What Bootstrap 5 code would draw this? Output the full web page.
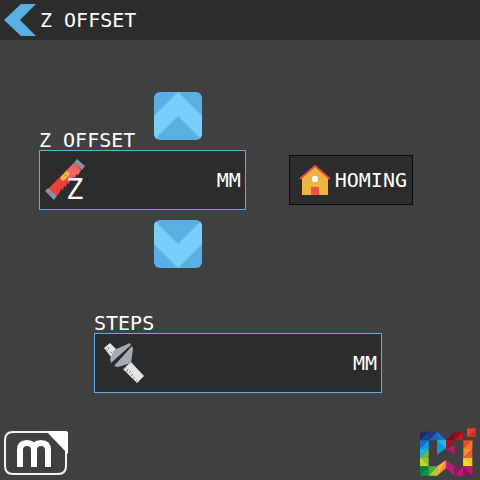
<!DOCTYPE html>
<html lang="en">
<head>
<meta charset="utf-8">
<meta name="viewport" content="width=device-width, initial-scale=1">
<title>Z Offset</title>
<link href="https://cdn.jsdelivr.net/npm/bootstrap@5.3.0/dist/css/bootstrap.min.css" rel="stylesheet">
<style>
body{background:#404040;color:#fff;font:20px/20px "DejaVu Sans Mono",monospace}
.topbar{background:#2c2c2c;height:40px}
.topbar h1{font-size:20px;line-height:20px;font-weight:400}
.back{width:32px;height:32px}
.back svg,.arrow svg,.logo{display:block}
.offset-area{padding:52px 67px 0 39px;gap:43px}
.arrow{width:48px;height:48px;border-radius:6px;overflow:hidden}
.label-arrow{gap:19px}
.up{margin-bottom:10px}
.down{margin:10px 0 0 115px}
.field{background:#2c2c2c;border:1px solid #58b0e3;height:60px;padding:0 4px 0 5px}
.field input{color:#fff;outline:0;min-width:0;text-align:right;font:inherit}
.homing{background:#2c2c2c;border:1px solid #0c0c0c;height:50px;padding:0 5px 0 9px;color:#fff}
.steps-area{padding:45px 98px 0 94px}
</style>
</head>
<body>
<div class="d-flex flex-column min-vh-100">
<header class="topbar d-flex align-items-center gap-1 ps-1">
  <button class="back btn p-0 border-0" type="button" aria-label="Back"><svg width="32" height="32" viewBox="0 0 32 32"><path d="M17 0H32L16 16 32 32H17L0 16Z" fill="#58b0e3"/></svg></button>
  <h1 class="m-0">Z OFFSET</h1>
</header>
<main>
  <section class="offset-area d-flex align-items-center">
    <div class="flex-grow-1">
      <div class="label-arrow d-flex">
        <label for="offset" class="align-self-end">Z OFFSET</label>
        <button class="arrow up btn p-0 border-0" type="button" aria-label="Increase"><svg width="48" height="48" viewBox="0 0 48 48"><path fill="#58b0e3" d="M0 0H48V48H0Z"/><path fill="#76d0fa" d="M24 0 48 24V48L24 24 0 48V24Z"/></svg></button>
      </div>
      <div class="field d-flex align-items-center">
        <svg width="42" height="56" viewBox="0 -7 42 56" class="flex-shrink-0" aria-hidden="true">
          <path fill="#eb403b" d="M3 30 29 4 36 11 33 16 31 15 30 19 28 18 27 22 25 21 24 25 22 24 21 28 19 27 18 31 16 30 14 35 11 37Z"/>
          <path fill="#f26460" d="M19 14 29 4 36 11 33 16 31 15 30 19 28 18 25 21Z"/>
          <path fill="#8b919e" d="M0 32 3 29 12 37 9 41ZM29 4 32 0 40 7 37 11Z"/>
          <path d="M18 19 22 15" stroke="#edb83e" stroke-width="5" stroke-linecap="round"/><path d="m20 17 1-1" stroke="#d58630" stroke-width="2"/>
          <text x="21" y="40" font-size="29" fill="#fff">Z</text>
        </svg>
        <input id="offset" type="text" class="flex-grow-1 w-100 bg-transparent border-0 p-0"><span>MM</span>
      </div>
      <button class="arrow down btn p-0 border-0" type="button" aria-label="Decrease"><svg width="48" height="48" viewBox="0 0 48 48"><path fill="#58b0e3" d="M0 0H48V48H0Z"/><path fill="#76d0fa" d="M0 0 24 24 48 0V24L24 48 0 24Z"/></svg></button>
    </div>
    <button class="homing d-flex align-items-center flex-shrink-0" type="button">
      <svg width="32" height="32" viewBox="0 0 32 32" class="me-1" aria-hidden="true"><path fill="#ebb540" d="M3 14 16 2 29 14V31H3Z"/><path fill="none" stroke="#eb5048" stroke-width="2" d="M1 15 16 2 31 15"/><path fill="#eb5048" d="M12 23h8v8h-8z"/><rect x="13" y="12" width="6" height="6" rx="2" fill="#fff"/></svg>HOMING
    </button>
  </section>
  <section class="steps-area">
    <label for="steps" class="d-block">STEPS</label>
    <div class="field d-flex align-items-center">
      <svg width="44" height="42" viewBox="0 0 44 42" class="flex-shrink-0" aria-hidden="true">
        <path fill="#e2e4e6" d="M4 6 10 1 18 9 11 15ZM23 27 31 20 44 34 37 41Z"/>
        <path stroke="#888" d="m6 7 2 2m0-4 1 2m1 3 2 1M26 25l-2 2m4 0-1 3m4-1-2 2m4 1-2 2m4 1-2 2m4 1-2 2"/>
        <path fill="#a3acb4" d="M14 8 30 1 31 3 11 21 10 17ZM32 4 33 7 31 21 18 25 14 24Z"/>
      </svg>
      <input id="steps" type="text" class="flex-grow-1 w-100 bg-transparent border-0 p-0"><span>MM</span>
    </div>
  </section>
</main>
<footer class="d-flex justify-content-between align-items-end mt-auto px-1 pb-1">
  <svg class="logo" width="64" height="46" viewBox="0 0 64 46" role="img" aria-label="m"><path fill="none" stroke="#f2f2f2" stroke-width="2" d="M44 2H9Q1 2 1 10V36Q1 44 9 44H54Q62 44 62 36V19"/><path fill="#fff" d="M42 1H62Q64 1 64 3V24Z"/><path fill="none" stroke="#fff" stroke-width="6" d="M16 37V20Q16 13 23 13 30 13 30 20V37M30 20Q30 13 37 13 44 13 44 20V37"/></svg>
  <svg class="logo" width="56" height="48" viewBox="24 16 168 144" role="img" aria-label="Wi">
    <path fill="#1c2a60" d="M24 27H50V53H24Z"/><path fill="#20418f" d="M24 53 50 27V53Z"/>
    <path fill="#1d3987" d="M50 27H76V53H50Z"/><path fill="#1b65b4" d="M50 53 76 27V53Z"/>
    <path fill="#166fc0" d="M24 53H50V79H24Z"/><path fill="#159bd7" d="M24 79 50 53V79Z"/>
    <path fill="#14b4e4" d="M24 79H50L24 105Z"/><path fill="#69bd45" d="M50 79V105H24Z"/>
    <path fill="#8fc63e" d="M24 105H50V131H24Z"/><path fill="#c2d72f" d="M24 105 50 131H24Z"/>
    <path fill="#087d3d" d="M24 131H50V159H24Z"/><path fill="#05954a" d="M24 159 50 131V159Z"/>
    <path fill="#49ac46" d="M50 131H76L50 159Z"/><path fill="#a9cd38" d="M76 131V159H50Z"/>
    <path fill="#1479c4" d="M76 27 102 52 76 62Z"/><path fill="#26b7ea" d="M76 53 102 52V76L76 95Z"/><path fill="#1597d5" d="M76 53 102 76 76 95Z"/>
    <path fill="#f58634" d="M76 131 102 113V137L76 159Z"/><path fill="#fbb03f" d="M76 131 102 113 76 159Z"/>
    <path fill="#780c1e" d="M102 53 128 27V53L102 79Z"/><path fill="#a51224" d="M102 53H128L102 79Z"/>
    <path fill="#8e1119" d="M128 27H154V53H128Z"/><path fill="#bd1c20" d="M128 53 154 27V53Z"/>
    <path fill="#b21c72" d="M102 79 128 66V93Z"/>
    <path fill="#ef4c23" d="M154 53H181V79H154Z"/><path fill="#f4762b" d="M181 53V79H154Z"/>
    <path fill="#f79329" d="M154 79H181L154 105Z"/><path fill="#ef5a28" d="M181 79V105H154Z"/>
    <path fill="#fbb92d" d="M154 105H181V131H154Z"/><path fill="#f9da29" d="M154 105 181 131H154Z"/>
    <path fill="#bd1978" d="M102 113 128 131V159L102 137Z"/><path fill="#8c1662" d="M128 131H154L128 159Z"/><path fill="#bc1b70" d="M154 131V159H128Z"/>
    <path fill="#8b125e" d="M154 131H181V159H154Z"/><path fill="#ba1766" d="M181 131V159L154 131Z"/>
    <path fill="#ef4328" d="M165 17H192V43H165Z"/><path fill="#d72d24" d="M192 17V43H165Z"/>
  </svg>
</footer>
</div>
<script src="https://cdn.jsdelivr.net/npm/bootstrap@5.3.0/dist/js/bootstrap.bundle.min.js"></script>
</body>
</html>
